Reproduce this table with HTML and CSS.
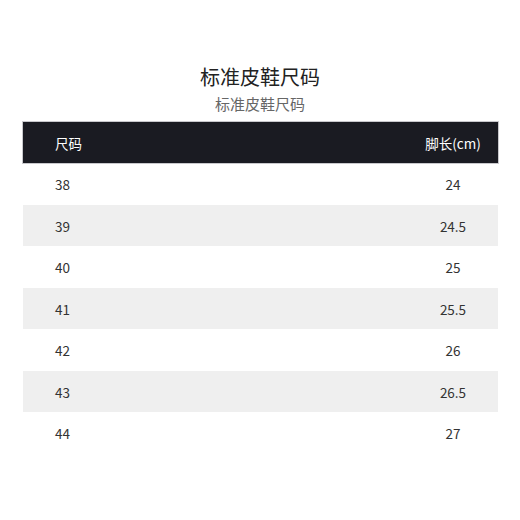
FILE: index.html
```html
<!DOCTYPE html>
<html>
<head>
<meta charset="utf-8">
<link rel="stylesheet" href="styles.css">
</head>
<body>
<div class="page">
  <h1 class="title">标准皮鞋尺码</h1>
  <p class="subtitle">标准皮鞋尺码</p>
  <div class="table">
    <div class="row head"><span class="c1">尺码</span><span class="c2">脚长(cm)</span></div>
    <div class="row"><span class="c1">38</span><span class="c2">24</span></div>
    <div class="row alt"><span class="c1">39</span><span class="c2">24.5</span></div>
    <div class="row"><span class="c1">40</span><span class="c2">25</span></div>
    <div class="row alt"><span class="c1">41</span><span class="c2">25.5</span></div>
    <div class="row"><span class="c1">42</span><span class="c2">26</span></div>
    <div class="row alt"><span class="c1">43</span><span class="c2">26.5</span></div>
    <div class="row"><span class="c1">44</span><span class="c2">27</span></div>
  </div>
</div>
</body>
</html>
```
FILE: styles.css
```css
html, body { margin: 0; padding: 0; background: #fff; }
body { font-family: "Noto Sans CJK SC", "Noto Sans", sans-serif; color: #333; }
.page { width: 520px; height: 520px; padding: 62px 23px 0 23px; box-sizing: border-box; }
.title { margin: 0; text-align: center; font-size: 20px; font-weight: 400; line-height: 30px; color: #222; }
.subtitle { margin: 0; text-align: center; font-size: 15px; line-height: 22px; color: #666; margin-top: 1px; }
.table { margin-top: 7px; width: 475px; }
.row { display: flex; align-items: center; height: 41.5px; font-size: 13.5px; color: #333; padding-top: 1px; box-sizing: border-box; }
.row.alt { background: #efefef; }
.row.head { background: #1a1b22; color: #fff; height: 41px; box-shadow: 0 0 0 1px #c8c8cc; padding-top: 0; }
.c1 { flex: 1; padding-left: 32px; }
.c2 { width: 90px; text-align: center; }
```
